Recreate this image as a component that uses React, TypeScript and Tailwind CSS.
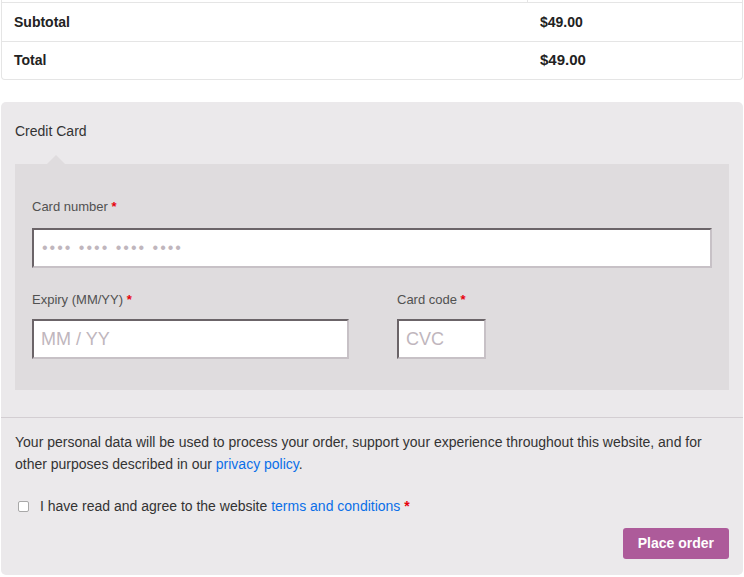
export default function App() {
  return (
    <main className="min-h-[577px] w-[744px] bg-white font-['Liberation_Sans',Arial,sans-serif] text-[#333]">
      {/* order totals, top row cut off */}
      <div className="mx-px overflow-hidden rounded-b-[4px] border border-t-0 border-[#e5e5e5]">
        <div className="flex h-[2px]">
          <div className="w-[526px] border-r border-[#e5e5e5]" />
        </div>
        <div className="flex h-[39px] items-center border-t border-[#e5e5e5] text-[14px] font-bold text-[#222]">
          <div className="w-[526px] pl-3">Subtotal</div>
          <div className="pl-[12px]">$49.00</div>
        </div>
        <div className="flex h-[38px] items-center border-t border-[#e5e5e5] text-[14px] font-bold text-[#222]">
          <div className="w-[526px] pl-3">Total</div>
          <div className="pl-[12px] text-[15px]">$49.00</div>
        </div>
      </div>

      {/* payment */}
      <div className="mx-px mt-[22px] rounded-[5px] bg-[#ebe9eb] pb-[16px]">
        <div className="px-[14px] pt-[19px] text-[14px] text-[#333]">Credit Card</div>
        <div className="relative mx-[14px] mt-[22px] bg-[#dfdcde] px-[17px] pb-[31px] pt-[33px]">
          <div className="absolute left-[32px] top-[-9px] h-0 w-0 border-x-[9px] border-b-[9px] border-x-transparent border-b-[#dfdcde]" />
          <label className="block text-[13px] text-[#515151]">
            Card number <span className="font-bold text-red-600">*</span>
          </label>
          <div className="mt-[11px] flex h-[40px] items-center border-2 border-b-[#c7c1c6] border-l-[#6b6468] border-r-[#c7c1c6] border-t-[#6b6468] bg-white pl-[8px] text-[16px] tracking-[2px] text-[#c0b6bd]">
            •••• •••• •••• ••••
          </div>
          <div className="mt-[22px] flex">
            <div className="w-[365px]">
              <label className="block text-[13px] text-[#515151]">
                Expiry (MM/YY) <span className="font-bold text-red-600">*</span>
              </label>
              <div className="mt-[10px] flex h-[40px] w-[317px] items-center border-2 border-b-[#c7c1c6] border-l-[#6b6468] border-r-[#c7c1c6] border-t-[#6b6468] bg-white pl-[7px] text-[18px] text-[#c0b6bd]">
                MM / YY
              </div>
            </div>
            <div>
              <label className="block text-[13px] text-[#515151]">
                Card code <span className="font-bold text-red-600">*</span>
              </label>
              <div className="mt-[10px] flex h-[40px] w-[89px] items-center border-2 border-b-[#c7c1c6] border-l-[#6b6468] border-r-[#c7c1c6] border-t-[#6b6468] bg-white pl-[7px] text-[18px] text-[#c0b6bd]">
                CVC
              </div>
            </div>
          </div>
        </div>

        <div className="mt-[27px] border-t border-[#d3ced2] px-[14px] pt-[13px]">
          <p className="text-[14px] leading-[22px] text-[#333]">
            Your personal data will be used to process your order, support your experience throughout this website, and for
            other purposes described in our <a className="text-[#0a6fe8]">privacy policy</a>.
          </p>
          <div className="mt-[21px] flex items-center text-[14px]">
            <span className="ml-[3px] h-[11px] w-[11px] rounded-[2px] border border-[#a8a8a8] bg-white" />
            <span className="ml-[11px]">
              I have read and agree to the website <a className="text-[#0a6fe8]">terms and conditions</a>{" "}
              <span className="font-bold text-red-600">*</span>
            </span>
          </div>
          <div className="mt-[11px] flex justify-end">
            <button className="h-[31px] rounded-[3px] bg-[#ad5b9a] px-[15px] text-[14px] font-bold text-white">
              Place order
            </button>
          </div>
        </div>
      </div>
    </main>
  );
}
